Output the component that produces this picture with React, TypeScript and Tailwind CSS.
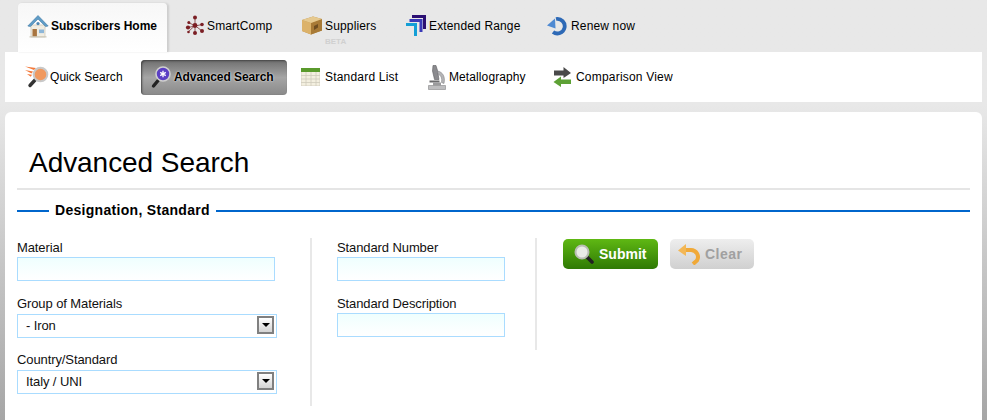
import React from 'react';

const HomeIcon = () => (
  <svg width="22" height="24" viewBox="0 0 22 24" className="shrink-0">
    <path d="M4 11h14v12H4z" fill="#f1ede2" stroke="#c9c4b4" strokeWidth="0.7" />
    <path d="M0.8 12 L11 1.5 L21.2 12 L18.6 12.6 L11 5 L3.4 12.6 Z" fill="#5f9cc6" stroke="#3f7ba6" strokeWidth="0.6" />
    <circle cx="11" cy="9.6" r="1.6" fill="#4d86b3" />
    <rect x="5.5" y="15" width="4.4" height="8" fill="#a8743f" />
    <rect x="12" y="15.5" width="5" height="3.6" fill="#8db6d8" />
    <rect x="2.5" y="22.2" width="17" height="1.3" fill="#cfcabb" />
  </svg>
);

const SmartCompIcon = () => (
  <svg width="20" height="21" viewBox="0 0 20 21" className="shrink-0">
    <g stroke="#8f5a5a" strokeWidth="1">
      <path d="M10 2.5V18M3 12.5L17 9.5M3 7.5L10 10.5M10 10.5L17 16M3 17L10 10.5" fill="none" />
    </g>
    <g fill="#7b1f24">
      <circle cx="10" cy="2.5" r="2" />
      <circle cx="10" cy="10.5" r="2.4" />
      <circle cx="3" cy="12.5" r="2.1" />
      <circle cx="17" cy="9.5" r="1.8" />
      <circle cx="3.8" cy="7.5" r="1.5" />
      <circle cx="10" cy="18" r="2" />
      <circle cx="17" cy="16" r="2" />
      <circle cx="3.5" cy="17" r="1.3" />
    </g>
  </svg>
);

const BoxIcon = () => (
  <svg width="20" height="19" viewBox="0 0 20 19" className="shrink-0">
    <path d="M0 4L11 0.500l9 2.500v11.500L9 18.500l-9-3.500z" fill="#b98c45" />
    <path d="M0 4l9 3v11.500l-9-3.500z" fill="#dcb26a" />
    <path d="M9 7l11-4v11.500L9 18.500z" fill="#a87a36" />
    <path d="M0 4L11 0.500l9 2.500L9 7z" fill="#e6c98f" />
    <path d="M12 10l4-2v3.500l-4 2.500z" fill="#6f4d20" />
  </svg>
);

const RangeIcon = () => (
  <svg width="20" height="21" viewBox="0 0 20 21" className="shrink-0">
    <path d="M6 0h14v14h-3V3H6z" fill="#2b0f73" />
    <path d="M3.500 4h13v13h-3V7h-10z" fill="#3a3ab8" />
    <path d="M0 8h11v13H8V11H0z" fill="#149fd6" />
  </svg>
);

const RenewIcon = () => (
  <svg width="21" height="20" viewBox="0 0 21 20" className="shrink-0">
    <path d="M9 3A7.300 7.300 0 1 1 6 16" fill="none" stroke="#2d69b6" strokeWidth="3.800" />
    <path d="M0 9.500L8 2.500L8.500 12.500z" fill="#4f8ad2" />
  </svg>
);

const QuickIcon = () => (
  <svg width="24" height="23" viewBox="0 0 24 23" className="shrink-0">
    <path d="M0 0.500l11 1.500-2 2zM0 4l8 1.500-1.500 2zM2 8l5 .800-1.200 2z" fill="#f4793a" />
    <path d="M10.500 13.500L5 19.500" stroke="#333" strokeWidth="3.400" strokeLinecap="round" />
    <circle cx="15.500" cy="8.500" r="6.800" fill="#f0995f" stroke="#c9c9c9" strokeWidth="2" />
  </svg>
);

const AdvancedIcon = () => (
  <svg width="20" height="23" viewBox="0 0 20 23" className="shrink-0">
    <path d="M7.500 14L2.500 20" stroke="#222" strokeWidth="3.400" strokeLinecap="round" />
    <circle cx="12" cy="8" r="7" fill="#5b3fc4" stroke="#cfcfcf" strokeWidth="1.600" />
    <path d="M12 4.800v6.400M9.200 6.400l5.600 3.200M14.800 6.400l-5.600 3.200" stroke="#fff" strokeWidth="1.300" />
  </svg>
);

const TableIcon = () => (
  <svg width="19" height="18" viewBox="0 0 19 18" className="shrink-0">
    <rect x="0" y="0" width="19" height="18" fill="#f3efdf" stroke="#cfcbbb" strokeWidth="0.800" />
    <rect x="0" y="0" width="19" height="4" fill="#5a9a2c" />
    <path d="M0 7.500h19M0 11h19M0 14.500h19M5 4v14M10 4v14M15 4v14" stroke="#cfcbbb" strokeWidth="0.800" />
  </svg>
);

const MicroscopeIcon = () => (
  <svg width="18" height="25" viewBox="0 0 18 25" className="shrink-0">
    <path d="M5 0.500h3l1.500 5 1.500 9H6.500L4.500 6z" fill="#8a8a8e" stroke="#5c5c60" strokeWidth="0.600" />
    <path d="M9.500 6c5.500 1 8 6 6.500 12.500l-2.500-1c.800-4-.500-7.500-3.500-8.500z" fill="#b4b4b6" stroke="#77777a" strokeWidth="0.500" />
    <rect x="1.500" y="15.500" width="10" height="2" fill="#6a6a6c" />
    <path d="M5 17.500h8v3H5z" fill="#9a9a9c" />
    <path d="M0.500 20.500h17v4h-17z" fill="#bdbdbf" stroke="#858587" strokeWidth="0.600" />
  </svg>
);

const CompareIcon = () => (
  <svg width="19" height="20" viewBox="0 0 19 20" className="shrink-0">
    <path d="M1 3.500h9.500V0L18 6l-7.500 5V8.500H1z" fill="#4a4a4a" />
    <path d="M18 12.500H8V9.500L0.500 15 8 20v-3h10z" fill="#5da135" />
  </svg>
);

const SubmitIcon = () => (
  <svg width="20" height="20" viewBox="0 0 20 20" className="shrink-0">
    <path d="M12 12l6 6" stroke="#222" strokeWidth="3.600" strokeLinecap="round" />
    <circle cx="8" cy="8" r="6.500" fill="#e9ece6" stroke="#b9bdb4" strokeWidth="2" />
  </svg>
);

const ClearIcon = () => (
  <svg width="23" height="21" viewBox="0 0 23 21" className="shrink-0">
    <path d="M7 6h6a7 7 0 0 1 6 10.500L15 20" fill="none" stroke="#f0a938" strokeWidth="4" />
    <path d="M0 6.500L8 0v12z" fill="#f3b755" />
  </svg>
);

const topTabs = [
  { label: 'SmartComp', icon: <SmartCompIcon />, width: 'w-[117px]', gap: 'gap-[2px]' },
  { label: 'Suppliers', icon: <BoxIcon />, width: 'w-[104px]', gap: 'gap-[3px]', beta: true },
  { label: 'Extended Range', icon: <RangeIcon />, width: 'w-[141px]', gap: 'gap-[3px]' },
  { label: 'Renew now', icon: <RenewIcon />, width: 'w-[110px]', gap: 'gap-[3px]' },
];

const SelectField = ({ label, value }: { label: string; value: string }) => (
  <div className="flex flex-col">
    <label className="h-[19px] text-[13px] leading-[19px] tracking-[-0.1px] text-[#111]">{label}</label>
    <div className="relative h-6 w-[260px]">
      <select
        defaultValue={value}
        className="h-6 w-full appearance-none rounded-none border border-[#aadcff] bg-white pl-[8px] text-[13px] tracking-[-0.1px] text-[#111] outline-none"
      >
        <option>{value}</option>
      </select>
      <span className="pointer-events-none absolute right-[3px] top-[3px] flex h-[18px] w-[17px] items-start justify-center border-2 border-[#808080] bg-gradient-to-b from-white to-[#d4d4d4] pt-[5px]">
        <span className="h-0 w-0 border-x-[4px] border-t-[4px] border-x-transparent border-t-black" />
      </span>
    </div>
  </div>
);

const TextField = ({ label, width }: { label: string; width: string }) => (
  <div className="flex flex-col">
    <label className="h-[19px] text-[13px] leading-[19px] tracking-[-0.1px] text-[#111]">{label}</label>
    <input
      type="text"
      className={`h-6 ${width} border border-[#aadcff] bg-gradient-to-b from-[#effffe] to-white outline-none`}
    />
  </div>
);

export default function App() {
  return (
    <div
      className="h-[420px] w-[987px] overflow-hidden bg-gradient-to-b from-[#e8e8e8] from-[25%] to-[#a6a6a6] text-black"
      style={{ fontFamily: '"Liberation Sans", Arial, sans-serif' }}
    >
      {/* Top tabs */}
      <div className="flex h-[52px] items-end pl-[18px]">
        <div className="flex h-[49px] w-[150px] items-center gap-[2px] rounded-t-[4px] border-r border-r-[#cfcfcf] bg-gradient-to-b from-[#f7f7f7] to-white pb-[4px] pl-[9px] shadow-[1px_0_2px_rgba(0,0,0,0.12)]">
          <HomeIcon />
          <span className="text-xs font-bold">Subscribers Home</span>
        </div>
        {topTabs.map((tab) => (
          <div key={tab.label} className={`relative flex h-[49px] ${tab.width} ${tab.gap} items-center pb-[4px] pl-[17px]`}>
            {tab.icon}
            <span className="text-xs tracking-[0.15px]">{tab.label}</span>
            {tab.beta && (
              <span className="absolute left-[40px] top-[35px] text-[8px] font-bold leading-none text-[#d0d0d0]">BETA</span>
            )}
          </div>
        ))}
      </div>

      {/* Sub navigation */}
      <div className="mx-[5px] flex h-[50px] items-center bg-white pl-[20px] text-xs">
        <div className="flex w-[116px] items-center gap-[1px] tracking-[0.05px]">
          <QuickIcon />
          <span>Quick Search</span>
        </div>
        <div className="flex h-[35px] w-[146px] items-center gap-[3px] rounded-[4px] bg-gradient-to-b from-[#6f6f6f] via-[#a5a5a5] to-[#8a8a8a] pl-[10px] font-bold tracking-[-0.08px] shadow-[inset_1px_1px_2px_#444] [text-shadow:0_0_2px_#fff]">
          <AdvancedIcon />
          <span>Advanced Search</span>
        </div>
        <div className="ml-[14px] flex w-[127px] items-center gap-[5px] tracking-[0.2px]">
          <TableIcon />
          <span>Standard List</span>
        </div>
        <div className="flex w-[125px] items-center gap-[3px] tracking-[0.1px]">
          <MicroscopeIcon />
          <span>Metallography</span>
        </div>
        <div className="flex items-center gap-[4px] tracking-[0.2px]">
          <CompareIcon />
          <span>Comparison View</span>
        </div>
      </div>

      {/* Main card */}
      <div className="mx-[5px] mt-[10px] h-[308px] rounded-t-[6px] bg-white px-[12px]">
        <h1 className="h-[78px] border-b-2 border-[#e5e5e5] pl-[12px] pt-[34px] text-[28px] leading-[34px] tracking-[-0.05px]">
          Advanced Search
        </h1>

        <div className="mt-[13px] flex h-[16px] w-[953px] items-center gap-[6px]">
          <span className="h-[2px] w-[32px] bg-[#0066cc]" />
          <span className="pb-[2px] text-sm font-bold tracking-[0.3px]">Designation, Standard</span>
          <span className="h-[2px] flex-1 bg-[#0066cc]" />
        </div>

        <div className="mt-[19px] flex items-start">
          <div className="flex h-[168px] w-[295px] flex-col gap-[13px] border-r-2 border-[#e8e8e8]">
            <TextField label="Material" width="w-[258px]" />
            <SelectField label="Group of Materials" value="- Iron" />
            <SelectField label="Country/Standard" value="Italy / UNI" />
          </div>
          <div className="flex h-[112px] w-[225px] flex-col gap-[13px] border-r-2 border-[#e8e8e8] pl-[25px]">
            <TextField label="Standard Number" width="w-[168px]" />
            <TextField label="Standard Description" width="w-[168px]" />
          </div>
          <div className="ml-[26px] mt-[1px] flex gap-[12px]">
            <button className="flex h-[30px] w-[95px] items-center gap-[5px] rounded-[5px] bg-gradient-to-b from-[#5fb813] to-[#2f7a05] pl-[11px] text-sm font-bold text-white">
              <SubmitIcon />
              Submit
            </button>
            <button className="flex h-[30px] w-[84px] items-center gap-[4px] rounded-[5px] bg-gradient-to-b from-[#eeeeee] to-[#d0d0d0] pl-[8px] text-sm font-bold tracking-[0.5px] text-[#a0a0a0]">
              <ClearIcon />
              Clear
            </button>
          </div>
        </div>
      </div>
    </div>
  );
}
